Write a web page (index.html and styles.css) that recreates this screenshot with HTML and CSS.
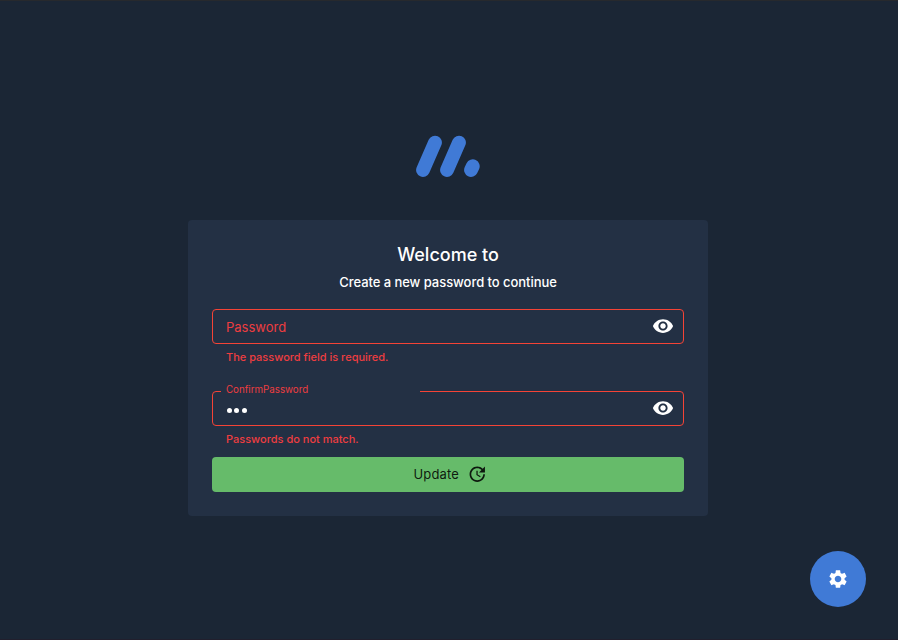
FILE: index.html
```html
<!DOCTYPE html>
<html lang="en">
<head>
<meta charset="utf-8">
<title>Create a new password</title>
<link rel="stylesheet" href="styles.css">
</head>
<body>
<main class="page">
  <svg class="logo" viewBox="0 0 66 44" fill="none" stroke="currentColor" stroke-width="13.8" stroke-linecap="round">
    <path d="M8 36 20 8.600M32 36 44 8.600M56 36 57.800 32.200"/>
  </svg>
  <form class="card">
    <h1 class="title">Welcome to</h1>
    <p class="subtitle">Create a new password to continue</p>
    <div class="field">
      <fieldset class="outline">
        <div class="row"><label class="placeholder">Password</label>
          <svg class="icon eye" viewBox="0 0 24 24"><path d="M12 4.500C7 4.500 2.730 7.610 1 12c1.730 4.390 6 7.500 11 7.500s9.270-3.110 11-7.500c-1.730-4.390-6-7.500-11-7.500M12 17c-2.760 0-5-2.240-5-5s2.240-5 5-5 5 2.240 5 5-2.240 5-5 5m0-8c-1.660 0-3 1.340-3 3s1.340 3 3 3 3-1.340 3-3-1.340-3-3-3"/></svg>
        </div>
      </fieldset>
      <p class="error">The password field is required.</p>
    </div>
    <div class="field">
      <fieldset class="outline outline-notched">
        <legend class="legend">ConfirmPassword</legend>
        <div class="row"><span class="dots"><i class="dot"></i><i class="dot"></i><i class="dot"></i></span>
          <svg class="icon eye" viewBox="0 0 24 24"><path d="M12 4.500C7 4.500 2.730 7.610 1 12c1.730 4.390 6 7.500 11 7.500s9.270-3.110 11-7.500c-1.730-4.390-6-7.500-11-7.500M12 17c-2.760 0-5-2.240-5-5s2.240-5 5-5 5 2.240 5 5-2.240 5-5 5m0-8c-1.660 0-3 1.340-3 3s1.340 3 3 3 3-1.340 3-3-1.340-3-3-3"/></svg>
        </div>
      </fieldset>
      <p class="error">Passwords do not match.</p>
    </div>
    <button class="submit" type="button">Update
      <svg class="icon update" viewBox="0 0 24 24"><path d="M11 8v5l4.250 2.520.77-1.280-3.520-2.090V8zm10 2V3l-2.640 2.640C16.740 4.010 14.490 3 12 3c-4.970 0-9 4.030-9 9s4.030 9 9 9 9-4.030 9-9h-2c0 3.860-3.140 7-7 7s-7-3.140-7-7 3.140-7 7-7c1.930 0 3.680.79 4.950 2.050L14 10h7z"/></svg>
    </button>
  </form>
</main>
<button class="fab" type="button" aria-label="Settings">
  <svg class="icon gear" viewBox="0 0 24 24"><path d="M19.140 12.940c.04-.3.06-.61.06-.94 0-.32-.02-.64-.07-.94l2.030-1.580c.18-.14.23-.41.12-.61l-1.920-3.320c-.12-.22-.37-.29-.59-.22l-2.390.96c-.5-.38-1.030-.7-1.620-.94l-.36-2.540c-.04-.24-.24-.41-.48-.41h-3.840c-.24 0-.43.17-.47.41l-.36 2.540c-.59.24-1.130.57-1.620.94l-2.390-.96c-.22-.08-.47 0-.59.22L2.740 8.870c-.12.21-.08.47.12.61l2.030 1.580c-.05.3-.09.63-.09.94s.02.64.07.94l-2.030 1.580c-.18.14-.23.41-.12.61l1.920 3.320c.12.22.37.29.59.22l2.390-.96c.5.38 1.030.7 1.620.94l.36 2.540c.05.24.24.41.48.41h3.840c.24 0 .44-.17.47-.41l.36-2.540c.59-.24 1.130-.56 1.620-.94l2.390.96c.22.08.47 0 .59-.22l1.920-3.320c.12-.22.07-.47-.12-.61zM12 15.600c-1.980 0-3.600-1.620-3.600-3.600s1.620-3.600 3.600-3.600 3.600 1.620 3.600 3.600-1.620 3.600-3.600 3.600"/></svg>
</button>
</body>
</html>
```
FILE: styles.css
```css
* { box-sizing: border-box; }
body {
  margin: 0;
  min-height: 640px;
  background: #1b2635;
  border-top: 1px solid #27292d;
  border-bottom: 1px solid #211f2d;
  color: #fff;
  font-family: Inter, "Liberation Sans", sans-serif;
}
.page {
  display: flex;
  flex-direction: column;
  align-items: center;
  padding: 133px 2px 0 0;
}
.logo { width: 66px; height: 44px; color: #407ad6; margin-bottom: 42px; }
.card {
  width: 520px;
  height: 296px;
  padding: 24px;
  border-radius: 4px;
  background: #233044;
}
.title {
  margin: 0;
  font-size: 18px;
  font-weight: 500;
  line-height: 22px;
  text-align: center;
}
.subtitle {
  margin: 8px 0 18px;
  font-size: 13px;
  letter-spacing: -.05px;
  font-weight: 500;
  line-height: 17px;
  text-align: center;
}
.field { height: 82px; }
.outline {
  height: 35px;
  min-width: 0;
  margin: 0;
  padding: 0 9px 0 8px;
  border: 1px solid #f44336;
  border-radius: 4px;
}
.outline-notched { height: 41px; margin-top: -6px; }
.legend {
  width: 199px;
  height: 13px;
  padding: 0 5px;
  color: #ee3d40;
  font-size: 9.75px;
  line-height: 10px;
}
.row {
  display: flex;
  align-items: center;
  justify-content: space-between;
  height: 33px;
  padding-left: 5px;
}
.outline-notched .row { margin-top: -6px; }
.placeholder { color: #ee3d40; font-size: 13px; line-height: 20px; padding-top: 1px; }
.icon { fill: currentColor; display: block; }
.eye { width: 22px; height: 22px; margin-top: -1px; }
.dots { display: flex; gap: 2.400px; padding: 3px 0 0 1px; }
.dot { width: 5px; height: 5px; border-radius: 50%; background: #fff; }
.error {
  margin: 4px 14px 0;
  color: #ee3d40;
  font-size: 11px;
  font-weight: 450;
  line-height: 18px;
}
.submit {
  display: flex;
  align-items: center;
  justify-content: center;
  gap: 8px;
  width: 100%;
  height: 35px;
  margin-top: -10px;
  padding: 0 0 1px 5px;
  border: 0;
  border-radius: 4px;
  background: #66bb6a;
  color: rgba(0, 0, 0, .87);
  font: 400 13px Inter, "Liberation Sans", sans-serif;
  letter-spacing: .15px;
}
.update { width: 20.500px; height: 20.500px; }
.fab {
  position: fixed;
  right: 32px;
  bottom: 33px;
  display: grid;
  place-items: center;
  width: 56px;
  height: 56px;
  padding: 0;
  border: 0;
  border-radius: 50%;
  background: #407ad6;
  color: #fff;
}
.gear { width: 22px; height: 22px; }
```
